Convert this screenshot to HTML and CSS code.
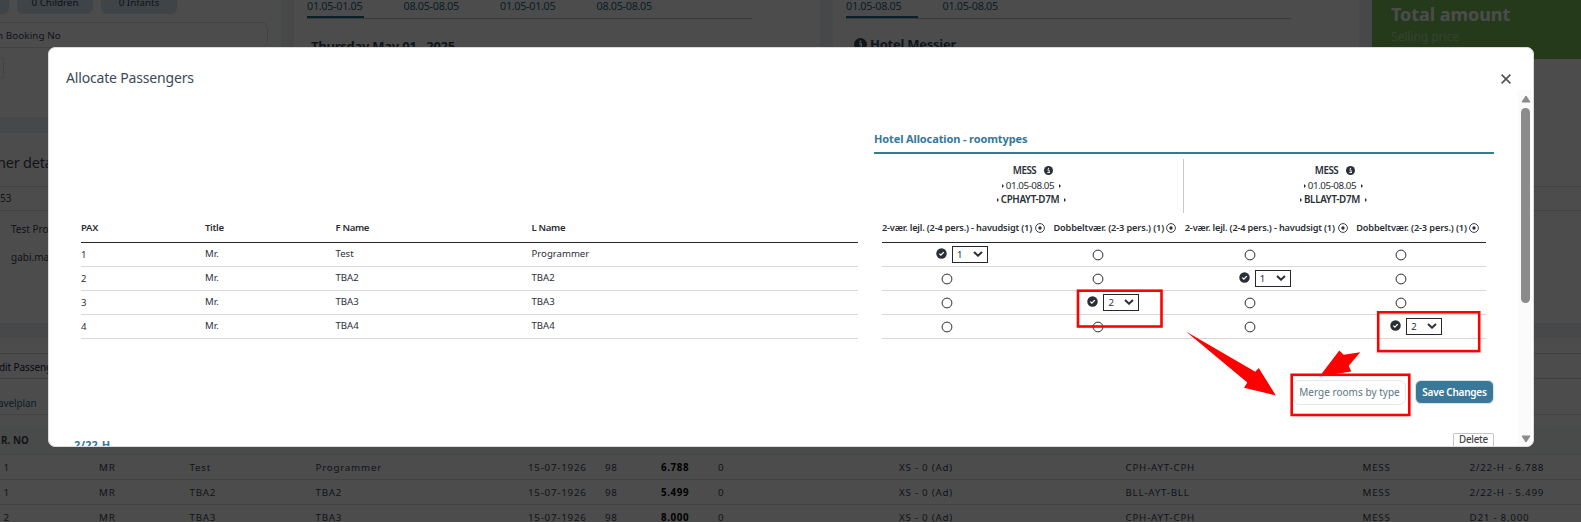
FILE: index.html
```
<!DOCTYPE html>
<html lang="en">
<head>
<meta charset="utf-8">
<title>Allocate Passengers</title>
<link rel="stylesheet" href="styles.css">
</head>
<body>
<svg width="0" height="0" class="defs">
  <symbol id="info" viewBox="0 0 16 16"><circle cx="8" cy="8" r="8" fill="currentColor"/><path d="M6 7h3v4.5h1.2M5.8 11.7h4.6" fill="none" stroke="#fff" stroke-width="1.7"/><circle cx="8" cy="4.2" r="1.3" fill="#fff"/></symbol>
  <symbol id="ring" viewBox="0 0 12 12"><circle cx="6" cy="6" r="4.9" fill="#fff" stroke="currentColor" stroke-width="1"/></symbol>
  <symbol id="dot" viewBox="0 0 12 12"><circle cx="6" cy="6" r="5.3" fill="none" stroke="currentColor" stroke-width="1.1"/><circle cx="6" cy="6" r="2" fill="currentColor"/></symbol>
  <symbol id="check" viewBox="0 0 12 12"><circle cx="6" cy="6" r="5.7" fill="currentColor"/><path d="M3.6 6.1l1.7 1.7 3.2-3.3" fill="none" stroke="#fff" stroke-width="1.4"/></symbol>
  <symbol id="chev" viewBox="0 0 10 6"><path d="M1 1l4 3.7L9 1" fill="none" stroke="currentColor" stroke-width="2"/></symbol>
</svg>

<div class="page">
  <div class="top">
    <section class="panel search">
      <div class="pills"><span class="pill"></span><span class="pill">0 Children</span><span class="pill">0 Infants</span></div>
      <div class="field">n Booking No</div>
      <div class="field stub"></div>
    </section>
    <section class="panel flights">
      <div class="tabs"><span class="on">01.05-01.05</span><span>08.05-08.05</span><span>01.05-01.05</span><span>08.05-08.05</span></div>
      <h3>Thursday May 01 , 2025</h3>
    </section>
    <section class="panel hotels">
      <div class="tabs"><span class="on wide">01.05-08.05</span><span>01.05-08.05</span></div>
      <h3><svg><use href="#info"/></svg>Hotel Messier</h3>
    </section>
    <aside><div class="total"><b>Total amount</b><span>Selling price</span></div></aside>
  </div>
  <section class="customer">
    <h2>ner deta</h2>
    <div class="num">53</div>
    <p>Test Pro</p>
    <p>gabi.ma</p>
  </section>
  <section class="pax">
    <div class="edit">dit Passeng</div>
    <div class="views"><span>avelplan</span><span>H</span></div>
    <div class="row head"><span>R. NO</span></div>
    <div class="row"><span>1</span><span>MR</span><span>Test</span><span>Programmer</span><span>15-07-1926</span><span>98</span><b>6.788</b><span>0</span><span>XS - 0 (Ad)</span><span>CPH-AYT-CPH</span><span>MESS</span><span>2/22-H - 6.788</span></div>
    <div class="row"><span>1</span><span>MR</span><span>TBA2</span><span>TBA2</span><span>15-07-1926</span><span>98</span><b>5.499</b><span>0</span><span>XS - 0 (Ad)</span><span>BLL-AYT-BLL</span><span>MESS</span><span>2/22-H - 5.499</span></div>
    <div class="row"><span>2</span><span>MR</span><span>TBA3</span><span>TBA3</span><span>15-07-1926</span><span>98</span><b>8.000</b><span>0</span><span>XS - 0 (Ad)</span><span>CPH-AYT-CPH</span><span>MESS</span><span>D21 - 8.000</span></div>
  </section>
</div>

<div class="backdrop"></div>

<div class="modal">
  <header><h1>Allocate Passengers</h1>
    <svg class="close" viewBox="0 0 10 10"><path d="M.6.6l8.8 8.8M9.4.6L.6 9.4" stroke="#4a4d52" stroke-width="1.5"/></svg>
  </header>
  <div class="body">
    <div class="content">
      <div class="tables">
        <div class="people">
          <div class="prow phead"><span>PAX</span><span>Title</span><span>F Name</span><span>L Name</span></div>
          <div class="prow"><i>1</i><span>Mr.</span><span>Test</span><span>Programmer</span></div>
          <div class="prow"><i>2</i><span>Mr.</span><span>TBA2</span><span>TBA2</span></div>
          <div class="prow"><i>3</i><span>Mr.</span><span>TBA3</span><span>TBA3</span></div>
          <div class="prow"><i>4</i><span>Mr.</span><span>TBA4</span><span>TBA4</span></div>
        </div>
        <div class="rooms">
          <h4>Hotel Allocation - roomtypes</h4>
          <div class="groups">
            <div class="group"><div class="mess">MESS<svg><use href="#info"/></svg></div><div class="dates"><u></u>01.05-08.05<u></u></div><div class="code"><u></u>CPHAYT-D7M<u></u></div></div>
            <div class="group"><div class="mess">MESS<svg><use href="#info"/></svg></div><div class="dates"><u></u>01.05-08.05<u></u></div><div class="code"><u></u>BLLAYT-D7M<u></u></div></div>
          </div>
          <div class="rrow rhead">
            <span><em>2-vær. lejl. (2-4 pers.) - havudsigt (1)</em><svg><use href="#dot"/></svg></span><span><em class="short">Dobbeltvær. (2-3 pers.) (1)</em><svg><use href="#dot"/></svg></span><span><em>2-vær. lejl. (2-4 pers.) - havudsigt (1)</em><svg><use href="#dot"/></svg></span><span><em class="short">Dobbeltvær. (2-3 pers.) (1)</em><svg><use href="#dot"/></svg></span>
          </div>
          <div class="rrow"><span class="sel"><svg><use href="#check"/></svg><span class="drop">1<svg><use href="#chev"/></svg></span></span><span class="off"><svg><use href="#ring"/></svg></span><span class="off"><svg><use href="#ring"/></svg></span><span class="off"><svg><use href="#ring"/></svg></span></div>
          <div class="rrow"><span class="off"><svg><use href="#ring"/></svg></span><span class="off"><svg><use href="#ring"/></svg></span><span class="sel"><svg><use href="#check"/></svg><span class="drop">1<svg><use href="#chev"/></svg></span></span><span class="off"><svg><use href="#ring"/></svg></span></div>
          <div class="rrow"><span class="off"><svg><use href="#ring"/></svg></span><span class="sel"><svg><use href="#check"/></svg><span class="drop">2<svg><use href="#chev"/></svg></span></span><span class="off"><svg><use href="#ring"/></svg></span><span class="off"><svg><use href="#ring"/></svg></span></div>
          <div class="rrow"><span class="off"><svg><use href="#ring"/></svg></span><span class="off"><svg><use href="#ring"/></svg></span><span class="off"><svg><use href="#ring"/></svg></span><span class="sel"><svg><use href="#check"/></svg><span class="drop">2<svg><use href="#chev"/></svg></span></span></div>
        </div>
      </div>
      <div class="actions"><button class="merge">Merge rooms by type</button><button class="save">Save Changes</button></div>
      <div class="next"><strong>2/22-H</strong><button class="delete">Delete</button></div>
    </div>
    <div class="scroll">
      <svg viewBox="0 0 10 8"><path d="M5 1L9 7H1z" fill="#8b8b8b" stroke="#8b8b8b" stroke-linejoin="round"/></svg>
      <div class="track"><div class="thumb"></div></div>
      <svg viewBox="0 0 10 8"><path d="M5 7L9 1H1z" fill="#8b8b8b" stroke="#8b8b8b" stroke-linejoin="round"/></svg>
    </div>
  </div>
</div>

<svg class="notes" viewBox="0 0 1581 522">
  <g fill="none" stroke="#fe0000" stroke-width="2.6">
    <rect x="1078" y="290.7" width="83.5" height="35.8"/>
    <rect x="1378.2" y="312.3" width="101" height="38.8"/>
    <rect x="1291.7" y="374.8" width="117.6" height="40.2"/>
  </g>
  <path fill="#fe0000" d="M1186 331.5L1255.3 371.7 1258.7 368 1275.9 395.4 1244 387.7 1247.3 382.4zM1360.3 352.2L1348.7 365.7 1351.3 371.5 1319.5 376.6 1339.3 350.5 1343.7 354.7z"/>
</svg>
</body>
</html>
```
FILE: styles.css
```
* { box-sizing: border-box; }
body { margin: 0; width: 1581px; height: 522px; overflow: hidden; position: relative; font: 10px/14px "Noto Sans", "Open Sans", sans-serif; color: #2b2e36; background: #fff; }
h1, h2, h3, h4, p { margin: 0; }
em, i { font-style: normal; }
u { text-decoration: none; }
span, b, i, em { white-space: nowrap; }
.defs { position: absolute; }

/* page behind the dialog */
.page { height: 522px; overflow: hidden; color: #3c4652; }
.top { display: grid; grid-template-columns: 281px 526px 526px 209px; column-gap: 13px; height: 133px; background: #eff1f7; }
.panel { background: #fff; overflow: hidden; }
.search { height: 117px; }
.pills { display: flex; gap: 8px; height: 14px; align-items: flex-end; color: #33444f; }
.pill { width: 76px; height: 25px; border-radius: 6px; background: #cfe3ee; text-align: center; padding-top: 7px; flex: none; font-size: 9.8px; }
.pill:first-child { width: 9px; border-radius: 0 6px 6px 0; }
.field { width: 268px; height: 26px; margin-top: 8px; border: 1px solid #dadde0; border-left: 0; border-radius: 0 7px 7px 0; padding: 6px 0 0; font-size: 9.8px; letter-spacing: .1px; text-indent: -3px; }
.stub { width: 4px; height: 22px; margin-top: 9px; }
.tabs { display: flex; gap: 39.5px; height: 19px; margin: 0 68px 0 13px; border-bottom: 1px solid #bfc2c4; color: #2c6580; font-size: 10.8px; }
.tabs span { width: 57px; height: 18px; line-height: 11px; letter-spacing: -.3px; }
.tabs .on { border-bottom: 2px solid #1f6d92; }
.tabs .wide { width: 72px; margin-right: -15px; }
h3 { font-size: 13px; line-height: 18px; margin: 18px 0 0 17px; letter-spacing: -.25px; }
.hotels h3 { display: flex; gap: 3px; margin: 16px 0 0 21px; }
h3 svg { width: 13px; height: 13px; margin-top: 3px; }
aside { background: #fff; width: 210px; }
.total { height: 59px; background: #78c25a; color: #fff; padding: 3px 0 0 19px; display: flex; flex-direction: column; }
.total b { font-size: 18px; line-height: 22px; letter-spacing: -.05px; }
.total span { font-size: 12px; line-height: 23px; opacity: .45; letter-spacing: -.05px; }
.customer { height: 190px; background: #fff; }
.customer h2 { font-size: 14.5px; font-weight: 400; line-height: 24px; height: 54px; padding-top: 17px; text-indent: -3px; border-bottom: 1px solid #dde1e8; letter-spacing: -.2px; }
.num { height: 24px; border-bottom: 1px solid #dde1e8; line-height: 23px; }
.customer p { padding-left: 11px; height: 28px; line-height: 37px; }
.pax { border-top: 15px solid #eff1f7; }
.edit { margin-top: 15px; height: 26px; border: 1px solid #d4d8de; border-width: 1px 0; line-height: 26px; text-indent: -1px; color: #223; letter-spacing: -.1px; }
.views { height: 36px; line-height: 49px; border-bottom: 1px solid #dde1e8; display: flex; gap: 14px; color: #2c6580; text-indent: -2px; letter-spacing: -.1px; }
.row { display: grid; grid-template-columns: 95.5px 90.5px 126px 212.5px 77px 56px 57px 181px 226.5px 237px 107px 1fr; padding-left: 3.5px; height: 25px; line-height: 26px; border-bottom: 1px solid #dde1e8; letter-spacing: .75px; font-size: 9.8px; }
.row b { color: #000; letter-spacing: .6px; }
.head { margin-top: 10px; height: 30px; line-height: 31px; padding-left: 1px; background: #f5faf8; font-weight: 700; letter-spacing: .1px; }
.backdrop { position: absolute; inset: 0; background: rgba(0,0,0,.7); }

/* dialog */
.modal { position: absolute; left: 48px; top: 47px; width: 1486px; height: 400px; background: #fff; border: 1px solid #dcdcdc; border-radius: 7px; overflow: hidden; }
header { display: flex; justify-content: space-between; align-items: center; height: 42px; padding: 17px 22px 0 17px; }
h1 { font-size: 14px; line-height: 20px; font-weight: 400; letter-spacing: -.17px; color: #3d4956; }
.close { width: 10px; height: 10px; margin-top: 2px; }
.body { display: flex; height: 357px; }
.content { width: 1469px; padding: 40px 24px 0 25px; flex: none; }
.tables { display: flex; justify-content: space-between; padding-left: 7px; height: 209px; align-items: flex-end; }
.people { width: 777px; }
.prow { display: grid; grid-template-columns: 124px 130.5px 196px 1fr; height: 24px; line-height: 22px; border-bottom: 1px solid #d8d8d8; font-size: 9.6px; }
.prow i { line-height: 24px; }
.phead { height: 28px; line-height: 25px; font-weight: 600; border-color: #25282f; letter-spacing: -.35px; }
.rooms { width: 620px; }
h4 { font-size: 11px; line-height: 16px; height: 23px; border-bottom: 2px solid #34789b; color: #34789b; letter-spacing: -.12px; }
.groups { display: grid; grid-template-columns: 1fr 1fr; margin: 5px 8px 0; height: 54px; }
.group { padding: 5px 0 0 0; text-align: center; }
.group + .group { border-left: 1px solid #c9c9c9; margin-left: -1px; }
.group > div { display: flex; justify-content: center; align-items: center; gap: 4px; line-height: 14.5px; height: 14.5px; }
.group .mess { gap: 8px; font-weight: 600; font-size: 9.8px; letter-spacing: -.5px; }
.mess svg { width: 9px; height: 9px; margin-bottom: 1px; }
.group .dates { font-size: 9.8px; letter-spacing: -.45px; padding-right: 3px; gap: 5px; }
.group .code { font-weight: 600; font-size: 9.8px; letter-spacing: -.32px; padding-right: 3px; gap: 5px; height: 14px; }
.group u { border-left: 2px solid #2b2e36; border-top: 2px solid transparent; border-bottom: 2px solid transparent; }
.group u:first-child { margin-right: -3px; }
.rrow { display: grid; grid-template-columns: 163px 123px 163px 123px; column-gap: 8.4px; height: 24px; margin: 0 8px; border-bottom: 1px solid #d8d8d8; }
.rrow > span { display: flex; align-items: center; justify-content: center; }
.rhead { height: 30px; border-color: #25282f; }
.rhead > span { justify-content: space-between; font-weight: 600; font-size: 9.2px; letter-spacing: -.17px; }
.rhead .short { letter-spacing: -.12px; }
.rhead svg { width: 10px; height: 10px; flex: none; }
.off svg { width: 12px; height: 12px; margin: 0 33px 0 0; }
.sel { gap: 5px; padding-right: 3px; }
.sel > svg { width: 11px; height: 11px; margin-bottom: 2px; }
.drop { width: 36px; height: 17px; border: 1px solid #25282f; display: flex; align-items: center; justify-content: space-between; padding: 0 4px; font-size: 9.6px; background: #fff; }
.drop svg { width: 10px; height: 6px; margin-bottom: 1px; }
.actions { display: flex; justify-content: flex-end; gap: 9px; padding-top: 41px; }
button { font: inherit; padding: 0; white-space: nowrap; }
.merge { width: 113px; height: 25px; border: 1px solid #dfe9ee; border-radius: 7px; background: #fff; color: #5b7480; letter-spacing: .02px; padding-bottom: 1px; }
.save { width: 79px; height: 24px; border: 1px solid #d5e4ec; border-radius: 6px; background: #3a789a; color: #fff; font-weight: 600; letter-spacing: -.25px; }
.next { display: flex; justify-content: space-between; padding-top: 28px; }
.next strong { font-size: 11px; line-height: 16px; padding-top: 4px; padding-left: 0; color: #34789b; letter-spacing: .15px; }
.delete { width: 41px; height: 20px; border: 1px solid #c5c5c5; border-radius: 2px; background: #fff; font-weight: 500; font-size: 9.8px; line-height: 10px; padding-bottom: 6px; color: #444; letter-spacing: -.25px; }
.scroll { width: 14px; background: #fbfbfb; display: flex; flex-direction: column; align-items: center; padding: 5px 0 4px 1px; }
.scroll svg { width: 10px; height: 8px; }
.track { flex: 1; padding-top: 5px; }
.thumb { width: 9px; height: 195px; border-radius: 5px; background: #8b8b8b; }

.notes { position: absolute; left: 0; top: 0; width: 1581px; height: 522px; pointer-events: none; }
```
